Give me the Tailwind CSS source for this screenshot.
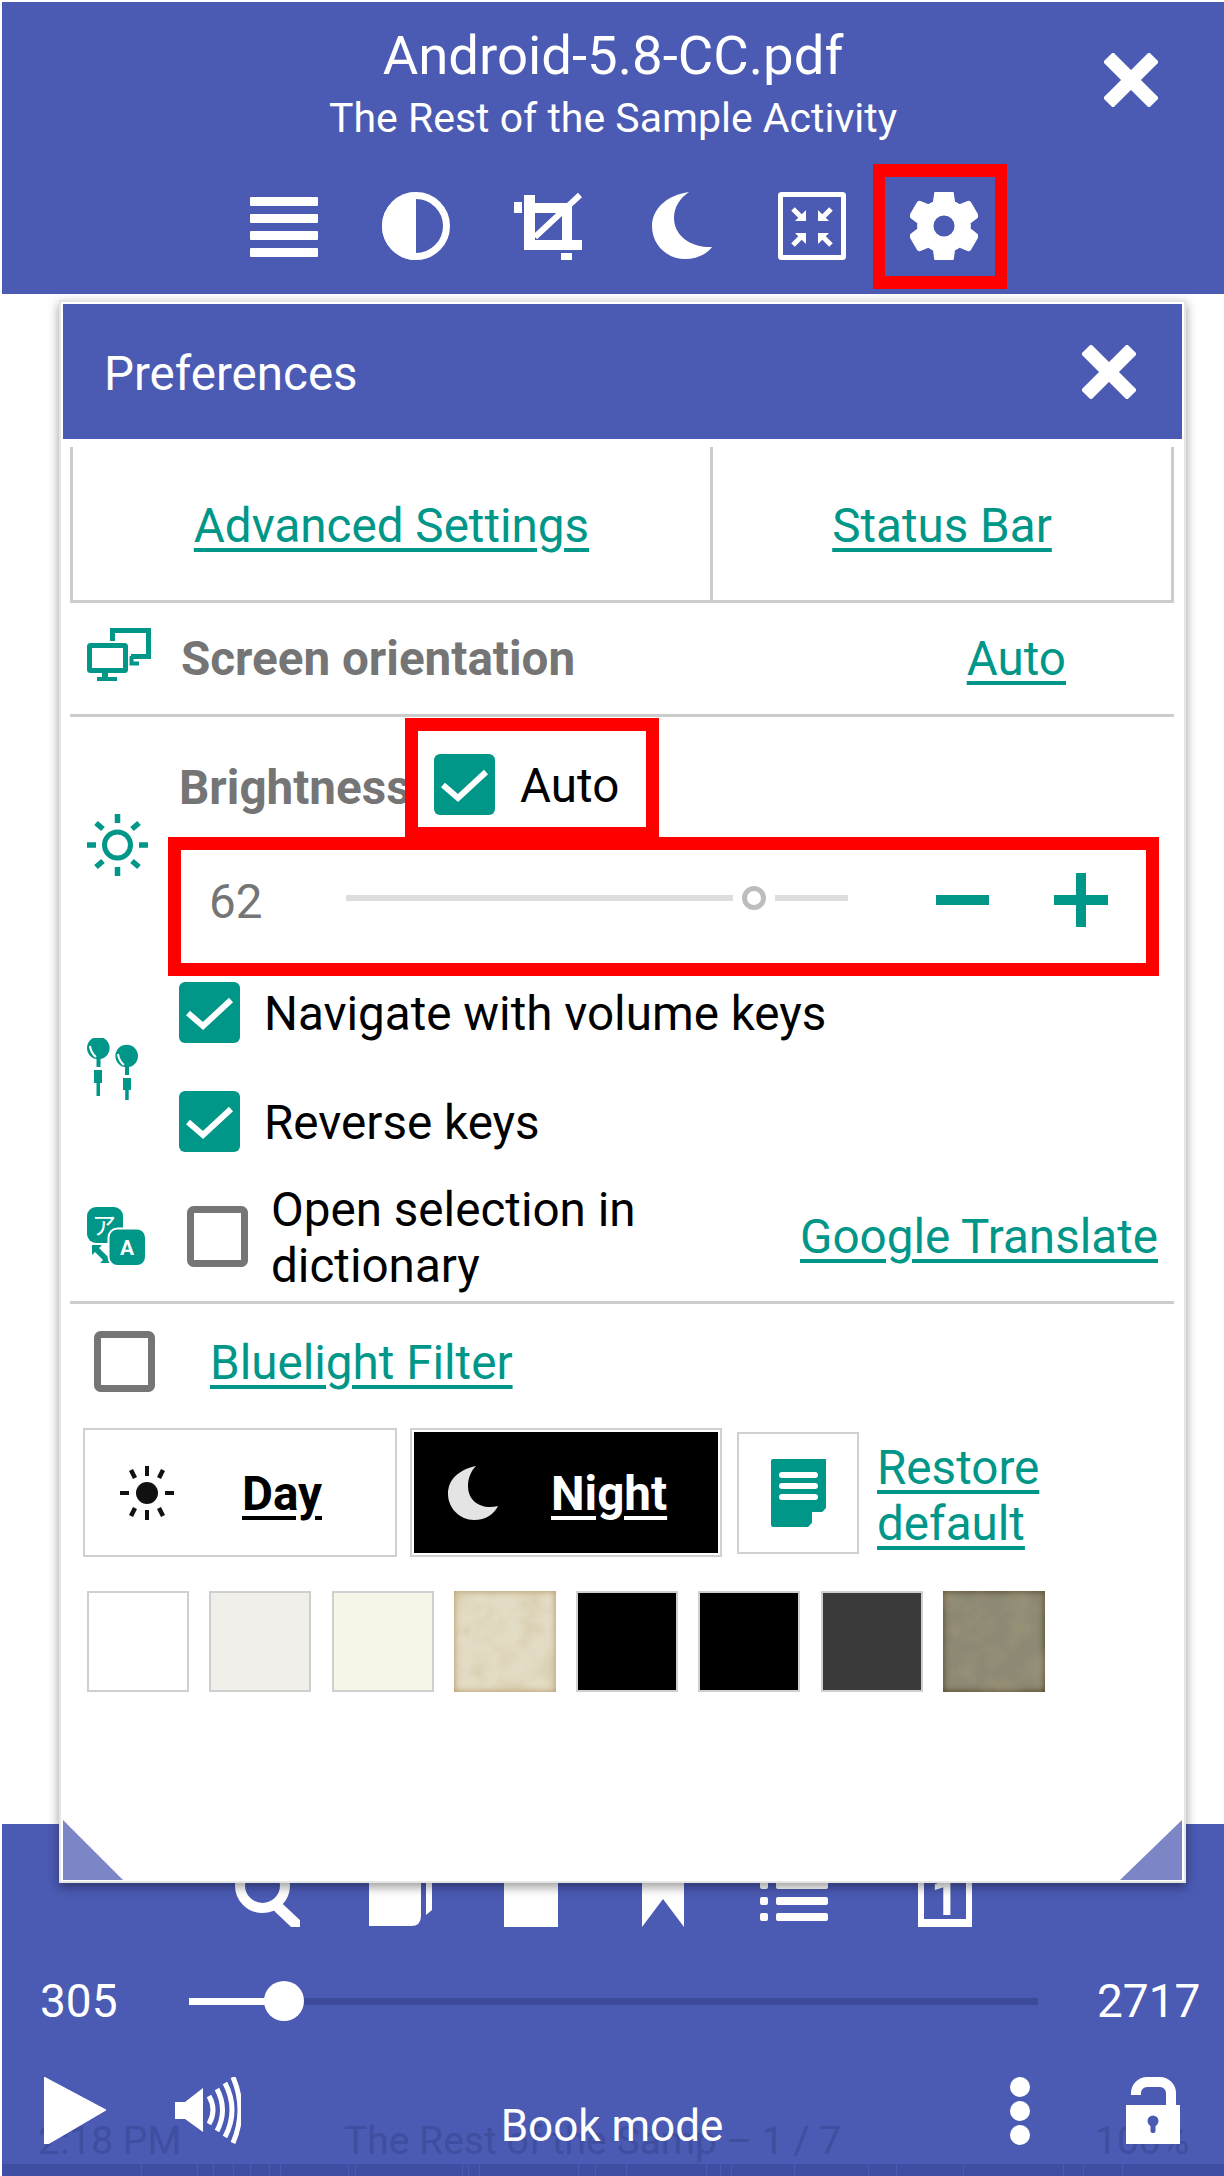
<!DOCTYPE html>
<html lang="en">

<head>
  <meta charset="UTF-8" />
  <meta name="viewport" content="width=device-width, initial-scale=1" />
  <title>Preferences</title>
  <script src="https://cdn.jsdelivr.net/npm/@tailwindcss/browser@4"></script>
</head>

<body class="bg-white w-[1224px] h-[2176px] overflow-hidden relative pt-[2px] pl-[2px] flex flex-col [font-family:Roboto,sans-serif]">

  <!-- Top bar -->
  <header class="bg-[#4b5ab3] h-[292px] shrink-0 relative text-white flex flex-col items-center">
    <h1 class="text-[54.500px] leading-[60px] mt-[23px]">Android-5.8-CC.pdf</h1>
    <p class="text-[41px] leading-[46px] mt-[10px]">The Rest of the Sample Activity</p>
    <button class="absolute left-[1102px] top-[51px]">
      <svg width="54" height="54" viewBox="0 0 54 54"><path d="M9 9L45 45M45 9L9 45" stroke="#fff" stroke-width="14" stroke-linecap="square" /></svg>
    </button>

    <div class="flex gap-[64px] mt-[51px] ml-[2px]">
      <svg width="68" height="68" viewBox="0 0 68 68" fill="#fff"><rect y="5" width="68" height="9" rx="1" /><rect y="22" width="68" height="9" rx="1" /><rect y="39" width="68" height="9" rx="1" /><rect y="56" width="68" height="9" rx="1" /></svg>
      <svg width="68" height="68" viewBox="0 0 68 68"><circle cx="34" cy="34" r="30.5" fill="none" stroke="#fff" stroke-width="7" /><path d="M34 0A34 34 0 0 0 34 68Z" fill="#fff" /></svg>
      <svg width="68" height="68" viewBox="0 0 68 68" fill="#fff"><rect x="0" y="10" width="8" height="11" /><rect x="10" y="3" width="11" height="55" /><rect x="21" y="11" width="37" height="10" /><rect x="48" y="11" width="10" height="47" /><rect x="10" y="48" width="58" height="10" /><rect x="47" y="61" width="11" height="7" /><path d="M66 3L21 45" stroke="#fff" stroke-width="6" /></svg>
      <svg width="68" height="68" viewBox="0 0 68 68" fill="#fff"><path d="M43 0C21 3 6 17 6 34C6 53 21 67 39 67C51 67 61 62 66 55C44 56 28 43 28 26C28 15 34 6 43 0Z" /></svg>
      <svg width="68" height="68" viewBox="0 0 68 68" fill="none" stroke="#fff"><rect x="2.500" y="2.500" width="63" height="63" stroke-width="5" rx="1" /><g fill="#fff" stroke="none"><path d="M28 18V29H17Z M40 18V29H51Z M28 52V41H17Z M40 52V41H51Z" /></g><path d="M15 17L25 27M53 17L43 27M15 53L25 43M53 53L43 43" stroke-width="5" /></svg>
      <div class="relative w-[68px] h-[68px]">
        <svg width="68" height="68" viewBox="2.4 2 19.2 20"><path fill="#fff" stroke="#fff" stroke-width=".8" d="M19.43 12.98c.04-.32.07-.64.07-.98s-.03-.66-.07-.98l2.11-1.65c.19-.15.24-.42.12-.64l-2-3.46c-.12-.22-.39-.3-.61-.22l-2.49 1c-.52-.4-1.08-.73-1.69-.98l-.38-2.65C14.46 2.18 14.25 2 14 2h-4c-.25 0-.46.18-.49.42l-.38 2.65c-.61.25-1.17.59-1.69.98l-2.49-1c-.23-.09-.49 0-.61.22l-2 3.46c-.13.22-.07.49.12.64l2.11 1.65c-.04.32-.07.65-.07.98s.03.66.07.98l-2.11 1.65c-.19.15-.24.42-.12.64l2 3.46c.12.22.39.3.61.22l2.49-1c.52.4 1.08.73 1.69.98l.38 2.65c.03.24.24.42.49.42h4c.25 0 .46-.18.49-.42l.38-2.65c.61-.25 1.17-.59 1.69-.98l2.49 1c.23.09.49 0 .61-.22l2-3.46c.12-.22.07-.49-.12-.64l-2.01-1.65zM12 15.5c-1.93 0-3.5-1.57-3.5-3.5s1.57-3.5 3.5-3.5 3.5 1.57 3.5 3.5-1.57 3.5-3.5 3.5z" /></svg>
        <div class="absolute -left-[37px] -right-[29px] -top-[28px] -bottom-[29px] border-x-[12px] border-y-[13px] border-[#ff0000]"></div>
      </div>
    </div>
  </header>

  <div class="flex-1"></div>

  <!-- Bottom bar -->
  <footer class="bg-[#4b5ab3] h-[352px] shrink-0 relative text-white">
    <div class="flex pl-[230px] gap-[64px] pt-[35px]">
      <svg width="68" height="68" viewBox="0 0 68 68" fill="none" stroke="#fff" stroke-linecap="round"><circle cx="30.500" cy="26.500" r="22.500" stroke-width="10" /><path d="M47 49L64 65" stroke-width="11" /></svg>
      <svg width="68" height="68" viewBox="0 0 68 68" fill="#fff"><path d="M5 0H57V57Q57 67 47 67H5Z" /><path d="M62 0H68V51L62 56Z" /></svg>
      <svg width="68" height="68" viewBox="0 0 68 68" fill="#fff"><rect x="8" y="0" width="54" height="68" /></svg>
      <svg width="68" height="68" viewBox="0 0 68 68" fill="#fff"><path d="M14 0H56V68L35 40L14 68Z" /></svg>
      <svg width="68" height="68" viewBox="0 0 68 68" fill="#fff"><rect x="0" y="22" width="8" height="8" rx="2" /><rect x="16" y="22" width="52" height="8" rx="2" /><rect x="0" y="38" width="8" height="8" rx="2" /><rect x="16" y="38" width="52" height="8" rx="2" /><rect x="0" y="54" width="8" height="8" rx="2" /><rect x="16" y="54" width="52" height="8" rx="2" /></svg>
      <svg class="ml-[26px]" width="54" height="68" viewBox="0 0 54 68"><rect x="3" y="3" width="48" height="62" fill="none" stroke="#fff" stroke-width="6" /><rect y="60" width="54" height="8" fill="#fff" /><text x="27" y="56" text-anchor="middle" fill="#fff" font-size="50" font-weight="700" font-family="Roboto">1</text></svg>
    </div>

    <div class="flex items-center mt-[54px] h-[40px]">
      <span class="w-[187px] pl-[38px] text-[46px] leading-none">305</span>
      <div class="w-[849px] h-[7px] bg-[#3d4a99] relative">
        <div class="w-[95px] h-full bg-white"></div>
        <div class="absolute left-[75px] -top-[17px] w-[40px] h-[40px] rounded-full bg-white"></div>
      </div>
      <span class="ml-[59px] text-[46px] leading-none">2717</span>
    </div>

    <div class="grid grid-cols-[1fr_auto_1fr] mt-[56px] h-[68px] pl-[42px] pr-[44px] relative z-10">
      <div class="flex items-start gap-[69px]">
        <svg width="62" height="67" viewBox="0 0 62 67" fill="#fff"><path d="M0 0L62 33L4 67H0Z" stroke="#fff" stroke-linejoin="round" /></svg>
        <svg width="66" height="67" viewBox="0 0 66 67" fill="none" stroke="#fff" stroke-width="5"><path d="M0 25H10L28 11V55L10 42H0Z" fill="#fff" stroke="none" /><path d="M34 19Q42 33 34 47M42 12Q53 33 42 54M50 6Q64 33 50 60M58 0Q72 33 58 66" /></svg>
      </div>
      <span class="text-[44px] leading-[48px] self-end -mb-[5px]">Book mode</span>
      <div class="flex justify-end items-start gap-[96px]">
        <svg width="20" height="68" viewBox="0 0 20 68" fill="#fff"><circle cx="10" cy="10" r="10" /><circle cx="10" cy="34" r="10" /><circle cx="10" cy="58" r="10" /></svg>
        <svg width="54" height="67" viewBox="0 0 54 67"><path d="M10 18V16A11 11 0 0 1 21 5H34A11 11 0 0 1 45 16V30" fill="none" stroke="#fff" stroke-width="10" /><path d="M0 28H54V67H0Z" fill="#fff" /><circle cx="27" cy="44" r="5.500" fill="#4b5ab3" /><rect x="24.500" y="44" width="5" height="12" rx="2" fill="#4b5ab3" /></svg>
      </div>
    </div>

    <!-- page text showing through the bar -->
    <div class="absolute left-0 right-0 bottom-[12px] h-[46px] flex items-center text-[39px] text-[#404e9f]">
      <span class="ml-[36px] w-[306px]">2:18 PM</span>
      <span class="w-[751px]">The Rest of the Samp – 1 / 7</span>
      <span>100%</span>
    </div>
    <div id="strip" class="absolute left-0 right-0 bottom-0 h-[12px] bg-[#3f4da3]"></div>
  </footer>

  <!-- Preferences dialog -->
  <div class="absolute left-[59px] top-[300px] w-[1127px] h-[1583px] bg-white border-[2px] border-[#e6e6e6] p-[2px] shadow-[0_4px_10px_rgba(0,0,0,0.4)] flex flex-col text-[47.600px] text-black">
    <div class="bg-[#4b5ab3] h-[135px] shrink-0 flex items-center justify-between pl-[41px] pr-[46px] text-white">
      <span class="text-[47.500px] pt-[6px]">Preferences</span>
      <svg width="54" height="54" viewBox="0 0 54 54"><path d="M9 9L45 45M45 9L9 45" stroke="#fff" stroke-width="14" stroke-linecap="square" /></svg>
    </div>

    <!-- Link table -->
    <div class="flex h-[156px] mt-[8px] ml-[7px] mr-[8px] border-b-[3px] border-[#cccccc] shrink-0">
      <div class="w-[640px] border-l-[3px] border-[#cccccc] flex items-center justify-center pt-[6px]">
        <a class="text-[#009688] underline underline-offset-[6px]">Advanced Settings</a>
      </div>
      <div class="flex-1 border-x-[3px] border-[#cccccc] flex items-center justify-center pt-[6px]">
        <a class="text-[#009688] underline underline-offset-[6px]">Status Bar</a>
      </div>
    </div>

    <!-- Screen orientation -->
    <div class="flex items-center h-[114px] ml-[7px] mr-[8px] pl-[17px] pr-[108px] pt-[2px] border-b-[3px] border-[#cccccc] shrink-0">
      <svg class="-mt-[10px]" width="64" height="53" viewBox="0 0 64 53" fill="none" stroke="#009688" stroke-width="5"><path d="M25.500 13V2.500H61.500V28.500H44" /><path d="M44.500 28V35.500H52" stroke-width="4" /><rect x="2.500" y="17.500" width="36" height="25" rx="1" /><rect x="15" y="45" width="6" height="4" fill="#009688" stroke="none" /><rect x="10" y="49" width="20" height="4" fill="#009688" stroke="none" /></svg>
      <span class="ml-[30px] font-bold text-[#757575]">Screen orientation</span>
      <a class="ml-auto text-[#009688] underline underline-offset-[6px]">Auto</a>
    </div>

    <!-- Brightness -->
    <div class="flex h-[259px] pl-[24px] shrink-0">
      <div class="w-[81px] flex items-center">
        <svg class="-mt-[4px]" width="61" height="62" viewBox="0 0 61 62" fill="none" stroke="#009688"><circle cx="30.500" cy="31" r="13" stroke-width="5" /><path d="M30.500 0V9M30.500 53V62M0 31H9M52 31H61M9 9L16 15M52 9L45 15M9 53L16 47M52 53L45 47" stroke-width="5.500" /></svg>
      </div>
      <div class="w-[991px]">
        <div class="flex h-[120px] pt-[1px] pl-[11px]">
          <span class="w-[226px] pt-[42px] leading-[56px] font-bold text-[#757575] whitespace-nowrap">Brightness</span>
          <div class="w-[254px] h-[119px] border-x-[13px] border-t-[13px] border-b-[10px] border-[#ff0000] flex pl-[16px] pt-[23px] gap-[25px] bg-white relative">
            <svg class="shrink-0" width="61" height="61" viewBox="0 0 61 61"><rect width="61" height="61" rx="6" fill="#009688" /><path d="M9 31L24 44L52 18" fill="none" stroke="#fff" stroke-width="6" /></svg>
            <span class="leading-[56px] pt-[4px]">Auto</span>
          </div>
        </div>
        <div class="h-[139px] border-[13px] border-[#ff0000] flex items-center pl-[28px]">
          <span class="w-[137px] text-[#757575] pb-[8px]">62</span>
          <div class="relative w-[502px] h-[6px] bg-[#dddddd] -mt-[18px]">
            <div class="absolute left-[387px] -top-[18px] w-[42px] h-[42px] bg-white flex items-center justify-center">
              <div class="w-[24px] h-[24px] rounded-full border-[5px] border-[#bdbdbd]"></div>
            </div>
          </div>
          <div class="ml-[88px] w-[53px] h-[10px] bg-[#009688] -mt-[14px]"></div>
          <svg class="ml-[65px] -mt-[14px]" width="54" height="54" viewBox="0 0 54 54" fill="#009688"><rect y="22" width="54" height="10" /><rect x="22" width="10" height="54" /></svg>
        </div>
      </div>
    </div>

    <!-- Volume keys -->
    <div class="flex h-[189px] pl-[24px] shrink-0">
      <div class="w-[92px] flex items-center">
        <svg class="-mt-[4px]" width="52" height="62" viewBox="0 0 52 62" fill="#009688"><circle cx="11.300" cy="10" r="11.300" /><rect x="9.500" y="18" width="4" height="11" /><rect x="7" y="32" width="8" height="13" /><rect x="9.500" y="45" width="3.500" height="13" /><circle cx="39.700" cy="18" r="11.300" /><rect x="38" y="26" width="4" height="11" /><rect x="36" y="40" width="8" height="12" /><rect x="38.200" y="52" width="3.500" height="10" /><path d="M3 8Q4 15 9 19M31 16Q32 23 37 27" fill="none" stroke="#fff" stroke-width="2" /></svg>
      </div>
      <div class="flex flex-col gap-[48px] pt-[6px]">
        <label class="flex gap-[24px] h-[61px] items-center">
          <svg class="shrink-0" width="61" height="61" viewBox="0 0 61 61"><rect width="61" height="61" rx="6" fill="#009688" /><path d="M9 31L24 44L52 18" fill="none" stroke="#fff" stroke-width="6" /></svg>
          <span class="pt-[5px]">Navigate with volume keys</span>
        </label>
        <label class="flex gap-[24px] h-[61px] items-center">
          <svg class="shrink-0" width="61" height="61" viewBox="0 0 61 61"><rect width="61" height="61" rx="6" fill="#009688" /><path d="M9 31L24 44L52 18" fill="none" stroke="#fff" stroke-width="6" /></svg>
          <span class="pt-[5px]">Reverse keys</span>
        </label>
      </div>
    </div>

    <!-- Dictionary -->
    <div class="flex items-center h-[136px] pt-[6px] pl-[24px] shrink-0">
      <svg class="shrink-0" width="59" height="59" viewBox="0 0 59 59"><rect x="0" y="0" width="36" height="36" rx="9" fill="#009688" /><text x="17" y="27" text-anchor="middle" font-size="24" fill="#fff" font-family="'Noto Sans CJK JP',sans-serif">ア</text><path d="M5 38H15L12 41L20 49L23 46V56H13L16 53L8 45L5 48Z" fill="#009688" /><rect x="21.500" y="21.500" width="37.500" height="37.500" rx="9" fill="#009688" stroke="#fff" stroke-width="2" /><text x="40" y="48" text-anchor="middle" font-size="21" font-weight="700" fill="#fff" font-family="Roboto">A</text></svg>
      <svg class="ml-[41px] shrink-0" width="61" height="61" viewBox="0 0 61 61"><rect x="3.500" y="3.500" width="54" height="54" rx="3" fill="#fff" stroke="#757575" stroke-width="7" /></svg>
      <span class="ml-[23px] w-[529px] leading-[56px] pt-[4px]">Open selection in<br />dictionary</span>
      <a class="text-[#009688] underline underline-offset-[6px] whitespace-nowrap pt-[4px]">Google Translate</a>
    </div>
    <div class="h-[3px] ml-[7px] mr-[8px] bg-[#cccccc] shrink-0"></div>

    <!-- Bluelight filter -->
    <div class="flex items-center mt-[27px] pl-[31px] h-[60px] gap-[55px] shrink-0">
      <svg class="shrink-0" width="61" height="61" viewBox="0 0 61 61"><rect x="3.500" y="3.500" width="54" height="54" rx="3" fill="#fff" stroke="#757575" stroke-width="7" /></svg>
      <a class="text-[#009688] underline underline-offset-[6px] pt-[6px]">Bluelight Filter</a>
    </div>

    <!-- Day / night -->
    <div class="flex items-center mt-[37px] pl-[20px] h-[129px] shrink-0">
      <button class="w-[314px] h-[129px] border-[2px] border-[#d0d0d0] bg-white flex items-center pl-[35px] text-black font-bold">
        <svg width="54" height="54" viewBox="0 0 54 54" fill="#111111"><circle cx="27" cy="27" r="11" /><path d="M25 0H29V10H25ZM25 44H29V54H25ZM0 25H9V29H0ZM45 25H54V29H45ZM9 5L13 3L17 11L13 13ZM45 5L41 3L37 11L41 13ZM9 49L13 51L17 43L13 41ZM45 49L41 51L37 43L41 41Z" /></svg>
        <span class="ml-[68px] underline underline-offset-[6px] pt-[4px]">Day</span>
      </button>
      <button class="ml-[13px] w-[312px] h-[129px] border-[2px] border-[#d0d0d0] bg-white p-[2px]">
        <span class="w-full h-full bg-black flex items-center pl-[34px] text-white font-bold">
          <svg width="50" height="54" viewBox="0 0 50 54" fill="#e4e4e4"><path d="M28 0C10 4 0 14 0 28C0 42 12 54 26 54C38 54 46 48 50 40C34 44 20 36 20 20C20 12 23 5 28 0Z" /></svg>
          <span class="ml-[53px] underline underline-offset-[6px] pt-[4px]">Night</span>
        </span>
      </button>
      <button class="ml-[15px] w-[122px] h-[122px] border-[2px] border-[#d0d0d0] bg-white flex items-center justify-center">
        <svg width="55" height="68" viewBox="0 0 55 68"><path d="M2 0H55V49L37 68H2A2 2 0 0 1 0 66V2A2 2 0 0 1 2 0Z" fill="#009688" /><path d="M41 53H55L44 68H41Z" fill="#fff" /><path d="M11 16H44M11 27H44M11 38H44" stroke="#fff" stroke-width="6" stroke-linecap="round" /></svg>
      </button>
      <a class="ml-[18px] text-[#009688] underline underline-offset-[6px] leading-[56px] pt-[6px]">Restore<br />default</a>
    </div>

    <!-- Background swatches -->
    <div class="flex gap-[20.300px] mt-[34px] pl-[24px] shrink-0">
      <div class="w-[102px] h-[101px] border-[2px] border-[#cfcfcf] bg-white"></div>
      <div class="w-[102px] h-[101px] border-[2px] border-[#cfcfcf] bg-[#f1efe9]"></div>
      <div class="w-[102px] h-[101px] border-[2px] border-[#cfcfcf] bg-[#f7f4e8]"></div>
      <div class="w-[102px] h-[101px] bg-[#e3dcc5] shadow-[inset_0_0_7px_#b0905c]">
        <svg width="102" height="101"><defs><filter id="grain" x="0" y="0" width="100%" height="100%"><feTurbulence type="fractalNoise" baseFrequency="0.045" numOctaves="4" seed="4" /><feColorMatrix values="0 0 0 0 0.55 0 0 0 0 0.45 0 0 0 0 0.25 1.2 0 0 0 -0.45" /></filter></defs><rect width="102" height="101" filter="url(#grain)" opacity=".5" /></svg>
      </div>
      <div class="w-[102px] h-[101px] border-[2px] border-[#cfcfcf] bg-black"></div>
      <div class="w-[102px] h-[101px] border-[2px] border-[#cfcfcf] bg-black"></div>
      <div class="w-[102px] h-[101px] border-[2px] border-[#cfcfcf] bg-[#3a3a3a]"></div>
      <div class="w-[102px] h-[101px] bg-[#8d8974] shadow-[inset_0_0_7px_#4d3a1e]">
        <svg width="102" height="101"><rect width="102" height="101" filter="url(#grain)" opacity=".35" /></svg>
      </div>
    </div>

    <!-- Corner resize handles -->
    <svg class="absolute left-[2px] bottom-[1px]" width="60" height="60" viewBox="0 0 60 60"><path d="M0 0V60H60Z" fill="#7c86c6" /></svg>
    <svg class="absolute right-[2px] bottom-[1px]" width="62" height="60" viewBox="0 0 62 60"><path d="M62 0V60H0Z" fill="#7c86c6" /></svg>
  </div>

  <script>
    // Random-looking page ticks along the bottom edge
    const ticks = [178, 250, 270, 296, 318, 342, 356, 444, 452, 590, 598, 612, 738, 760, 800, 902, 920, 934, 1016, 1110, 1146, 1232, 1360, 1386, 1436];
    const strip = document.getElementById("strip");
    ticks.forEach((t) => {
      const el = document.createElement("i");
      el.className = "absolute top-0 bottom-0 w-[1px] bg-[#4b5ab3]";
      el.style.left = Math.round(t * 0.78) + "px";
      strip.appendChild(el);
    });
  </script>
</body>

</html>
